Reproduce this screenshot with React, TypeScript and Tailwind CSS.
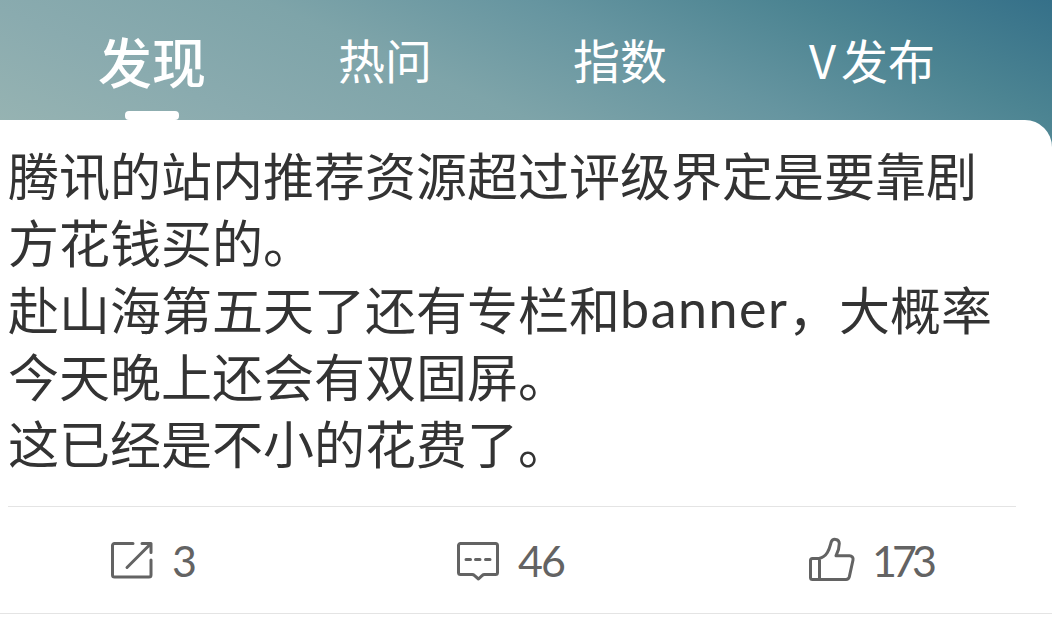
import type { ReactNode } from 'react'
import clsx from 'clsx'

interface Tab {
  id: string
  label: ReactNode
  active?: boolean
  className: string
}

const tabs: Tab[] = [
  { id: 'discover', label: '发现', active: true, className: 'w-[108px]' },
  { id: 'hot', label: '热问', className: 'ml-[131px] w-[96px]' },
  { id: 'index', label: '指数', className: 'ml-[139px] w-[96px]' },
  {
    id: 'publish',
    label: (
      <>
        <span className="inline-block w-[32px]">V</span>发布
      </>
    ),
    className: 'ml-[139px] w-[130px]',
  },
]

function ShareIcon() {
  return (
    <svg className="mb-[2px]" width="46" height="40" viewBox="0 0 46 40" fill="none" stroke="#636363" strokeWidth="3" strokeLinecap="round" strokeLinejoin="round">
      <path d="M24 3.500H5.500a2 2 0 0 0-2 2V35a2 2 0 0 0 2 2H40a2 2 0 0 0 2-2V20" />
      <path d="M33 3.500H42V12.500M41.500 4L18 27.500" />
    </svg>
  )
}

function CommentIcon() {
  return (
    <svg width="46" height="42" viewBox="0 0 46 42" fill="none" stroke="#636363" strokeWidth="3" strokeLinecap="round" strokeLinejoin="round">
      <path d="M5.500 3.500H40.500a2 2 0 0 1 2 2V32.500a2 2 0 0 1-2 2H29.500a3 3 0 0 0-2.200.9L23.500 39 19.300 35.400a3 3 0 0 0-2.200-.9H5.500a2 2 0 0 1-2-2V5.500a2 2 0 0 1 2-2Z" />
      <path d="M11 19.500h4.500M20.500 19.500h4.500M30.500 19.500h4.500" />
    </svg>
  )
}

function LikeIcon() {
  return (
    <svg width="48" height="46" viewBox="0 0 48 46" fill="none" stroke="#636363" strokeWidth="3" strokeLinecap="round" strokeLinejoin="round">
      <path d="M11 22.500H4.500a2 2 0 0 0-2 2V41.500a2 2 0 0 0 2 2H38a3.500 3.500 0 0 0 3.300-2.600L45 24a3.500 3.500 0 0 0-3.400-4.300H28C30.500 15 31.300 10 31.300 7.500a4.200 4.200 0 0 0-8.200-1.200C21.500 12 20 20.500 11 22.500ZM11.500 22.500V43" />
    </svg>
  )
}

function Action({ icon, count, className, countClassName }: { icon: ReactNode; count: string; className: string; countClassName?: string }) {
  return (
    <button className={clsx('flex h-[46px] items-end', className)}>
      {icon}
      <span className={clsx("w-[66px] whitespace-nowrap text-left font-['Lato'] text-[43px] leading-[42px] text-[#636363]", countClassName)}>
        {count}
      </span>
    </button>
  )
}

export default function App() {
  return (
    <div className="flex h-[619px] w-[1052px] flex-col overflow-hidden bg-[linear-gradient(24deg,#96b3b2_6%,#8aabaf_24%,#7ea4a9_44%,#6695a0_63%,#4c8492_81%,#357089_100%)] bg-[length:1052px_160px] bg-no-repeat font-['Noto_Sans_CJK_SC',sans-serif]">
      <nav className="flex h-[120px] shrink-0 pl-[98px] text-white">
        {tabs.map((tab) => (
          <div key={tab.id} className={clsx('flex flex-col items-center whitespace-nowrap', tab.className)}>
            <span className={clsx('leading-[72px]', tab.active ? 'mt-[25px] text-[54px] font-medium' : 'mt-[23px] text-[47px]')}>
              {tab.label}
            </span>
            {tab.active && <i className="mt-3.5 h-[9px] w-[54px] rounded-[4px] bg-white" />}
          </div>
        ))}
      </nav>

      <main className="flex-1 rounded-tr-[27px] bg-white">
        <article className="h-[386px] pl-2 pt-[21px] text-[51px] leading-[67px] whitespace-nowrap text-[#333]">
          <p>腾讯的站内推荐资源超过评级界定是要靠剧</p>
          <p>方花钱买的。</p>
          <p>
            赴山海第五天了还有专栏和
            <span className="inline-block h-[67px] w-[168px] align-top font-['Lato'] text-[52px] tracking-[1.5px]">banner</span>
            ，大概率
          </p>
          <p>今天晚上还会有双固屏。</p>
          <p>这已经是不小的花费了。</p>
        </article>

        <div className="flex h-[108px] border-b border-[#e4e4e4]">
          <div className="ml-2 flex w-[1008px] border-t border-[#e4e4e4] pt-[29px]">
            <Action className="ml-[101px] gap-[17px]" icon={<ShareIcon />} count="3" />
            <Action className="ml-[217px] gap-[17px]" icon={<CommentIcon />} count="46" countClassName="tracking-[-2px]" />
            <Action className="ml-[224px] gap-[16px]" icon={<LikeIcon />} count="173" countClassName="tracking-[-5px]" />
          </div>
        </div>
      </main>
    </div>
  )
}
